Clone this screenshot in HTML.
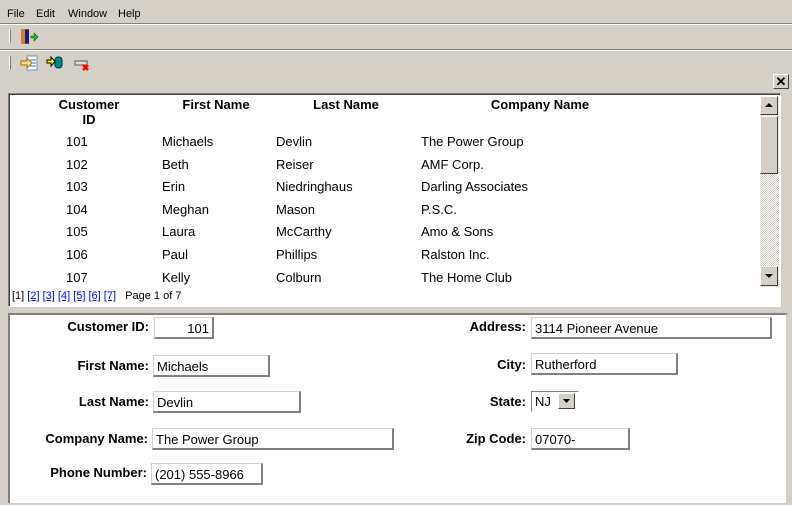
<!DOCTYPE html>
<html><head><style>
body{margin:0;width:792px;height:505px;background:#d4d0c8;font-family:"Liberation Sans",sans-serif;font-size:13px;position:relative;overflow:hidden}
.a{position:absolute;white-space:nowrap}
.menu{font-size:11px;top:8px}
.hl{position:absolute;left:0;width:792px;height:1px;background:#808080}
.hw{position:absolute;left:0;width:792px;height:1px;background:#fff}
.in{position:absolute;background:#fff;border-top:1px solid #d4d0c8;border-left:1px solid #d4d0c8;border-right:2px solid #808080;border-bottom:2px solid #808080;box-sizing:border-box;font-size:13px;padding:3px 0 0 3px;line-height:15px}
.lb{position:absolute;font-weight:bold;text-align:right;width:200px}
.h{position:absolute;font-weight:bold;text-align:center}
.c{position:absolute}
a{color:#00f;text-decoration:underline}
</style></head><body>
<div class="a menu" style="left:7px">File</div>
<div class="a menu" style="left:36px">Edit</div>
<div class="a menu" style="left:68px">Window</div>
<div class="a menu" style="left:118px">Help</div>
<div class="hl" style="top:23px"></div><div class="hw" style="top:24px"></div>
<div class="a" style="left:9px;top:29px;width:1px;height:14px;background:#fff;border-right:1px solid #808080"></div>
<svg class="a" style="left:20px;top:28px" width="20" height="17"><rect x="1" y="1" width="8" height="15" fill="#8b4513"/><rect x="3" y="2" width="6" height="13" fill="#1a1a80"/><rect x="1" y="1" width="4" height="15" fill="#d08030"/><path d="M11 8h3v-3l4 4-4 4v-3h-3z" fill="#3a3" stroke="#060" stroke-width=".6"/></svg>
<div class="hl" style="top:49px"></div><div class="hw" style="top:50px"></div>
<div class="a" style="left:9px;top:56px;width:1px;height:14px;background:#fff;border-right:1px solid #808080"></div>
<svg class="a" style="left:20px;top:55px" width="18" height="16"><rect x="7" y="1" width="10" height="14" fill="#fff" stroke="#88a"/><path d="M10 5h6M10 8h6M10 11h6" stroke="#36c"/><path d="M1 6h6v-3l5 5-5 5v-3h-6z" fill="#f0e080" stroke="#a07020"/></svg>
<svg class="a" style="left:46px;top:55px" width="18" height="15"><path d="M1 5h4v-3l4 4.5-4 4.5v-3h-4z" fill="#ff0" stroke="#000"/><rect x="9" y="2" width="7" height="11" rx="3" fill="#088" stroke="#033"/></svg>
<svg class="a" style="left:74px;top:60px" width="16" height="12"><rect x="1" y="1" width="12" height="4" fill="#ddd" stroke="#555"/><path d="M9 5l5 5M14 5l-5 5" stroke="#f00" stroke-width="2.5"/></svg>
<div class="a" style="left:773px;top:74px;width:14px;height:13px;background:#d4d0c8;border:1px solid;border-color:#fff #404040 #404040 #fff;font-size:13px;line-height:13px;text-align:center;font-weight:bold">✕</div>
<div class="a" style="left:8px;top:93px;width:771px;height:212px;background:#fff;border:1px solid;border-color:#808080 #fff #fff #808080;box-shadow:inset 1px 1px 0 #404040"></div>
<div class="h" style="left:40px;top:97px;width:98px;line-height:15px">Customer<br>ID</div>
<div class="h" style="left:166px;top:97px;width:100px">First Name</div>
<div class="h" style="left:296px;top:97px;width:100px">Last Name</div>
<div class="h" style="left:460px;top:97px;width:160px">Company Name</div>
<div class="c" style="left:66px;top:134px">101</div><div class="c" style="left:162px;top:134px">Michaels</div><div class="c" style="left:276px;top:134px">Devlin</div><div class="c" style="left:421px;top:134px">The Power Group</div>
<div class="c" style="left:66px;top:157px">102</div><div class="c" style="left:162px;top:157px">Beth</div><div class="c" style="left:276px;top:157px">Reiser</div><div class="c" style="left:421px;top:157px">AMF Corp.</div>
<div class="c" style="left:66px;top:179px">103</div><div class="c" style="left:162px;top:179px">Erin</div><div class="c" style="left:276px;top:179px">Niedringhaus</div><div class="c" style="left:421px;top:179px">Darling Associates</div>
<div class="c" style="left:66px;top:202px">104</div><div class="c" style="left:162px;top:202px">Meghan</div><div class="c" style="left:276px;top:202px">Mason</div><div class="c" style="left:421px;top:202px">P.S.C.</div>
<div class="c" style="left:66px;top:224px">105</div><div class="c" style="left:162px;top:224px">Laura</div><div class="c" style="left:276px;top:224px">McCarthy</div><div class="c" style="left:421px;top:224px">Amo &amp; Sons</div>
<div class="c" style="left:66px;top:247px">106</div><div class="c" style="left:162px;top:247px">Paul</div><div class="c" style="left:276px;top:247px">Phillips</div><div class="c" style="left:421px;top:247px">Ralston Inc.</div>
<div class="c" style="left:66px;top:270px">107</div><div class="c" style="left:162px;top:270px">Kelly</div><div class="c" style="left:276px;top:270px">Colburn</div><div class="c" style="left:421px;top:270px">The Home Club</div>
<div class="a" style="left:12px;top:290px;font-size:11px">[1] <a>[2]</a> <a>[3]</a> <a>[4]</a> <a>[5]</a> <a>[6]</a> <a>[7]</a>&nbsp;&nbsp; Page 1 of 7</div>
<div class="a" style="left:760px;top:96px;width:19px;height:191px;background:repeating-conic-gradient(#fff 0 25%,#d4d0c8 0 50%) 0 0/2px 2px"></div>
<div class="a" style="left:760px;top:96px;width:16px;height:17px;background:#d4d0c8;border:1px solid;border-color:#fff #404040 #404040 #fff"><svg width="16" height="17"><path d="M4 10h8l-4-4z"/></svg></div>
<div class="a" style="left:760px;top:116px;width:16px;height:56px;background:#d4d0c8;border:1px solid;border-color:#fff #404040 #404040 #fff"></div>
<div class="a" style="left:760px;top:266px;width:16px;height:18px;background:#d4d0c8;border:1px solid;border-color:#fff #404040 #404040 #fff"><svg width="16" height="18"><path d="M4 7h8l-4 4z"/></svg></div>
<div class="a" style="left:8px;top:313px;width:780px;height:190px;background:#fff;border-left:2px solid #808080;border-top:2px solid #808080;box-sizing:border-box;border-right:2px solid #d4d0c8"></div>
<div class="lb" style="left:-51px;top:319px">Customer ID:</div><div class="in" style="left:154px;top:317px;width:60px;height:22px;text-align:right;padding-right:3px">101</div>
<div class="lb" style="left:-51px;top:358px">First Name:</div><div class="in" style="left:153px;top:355px;width:117px;height:22px">Michaels</div>
<div class="lb" style="left:-51px;top:394px">Last Name:</div><div class="in" style="left:153px;top:391px;width:148px;height:22px">Devlin</div>
<div class="lb" style="left:-52px;top:431px">Company Name:</div><div class="in" style="left:152px;top:428px;width:242px;height:22px">The Power Group</div>
<div class="lb" style="left:-53px;top:465px">Phone Number:</div><div class="in" style="left:151px;top:463px;width:112px;height:22px">(201) 555-8966</div>
<div class="lb" style="left:326px;top:319px">Address:</div><div class="in" style="left:531px;top:317px;width:241px;height:22px">3114 Pioneer Avenue</div>
<div class="lb" style="left:326px;top:357px">City:</div><div class="in" style="left:531px;top:353px;width:147px;height:22px">Rutherford</div>
<div class="lb" style="left:326px;top:394px">State:</div><div class="in" style="left:531px;top:391px;width:48px;height:21px;border:1px solid;border-color:#808080 #fff #fff #808080;padding-top:2px">NJ</div>
<div class="a" style="left:558px;top:393px;width:17px;height:16px;background:#d4d0c8;border:1px solid;border-color:#fff #404040 #404040 #fff;box-sizing:border-box"><svg width="15" height="14"><path d="M4 5h7l-3.5 4z"/></svg></div>
<div class="lb" style="left:326px;top:431px">Zip Code:</div><div class="in" style="left:531px;top:428px;width:99px;height:22px">07070-</div>
</body></html>
